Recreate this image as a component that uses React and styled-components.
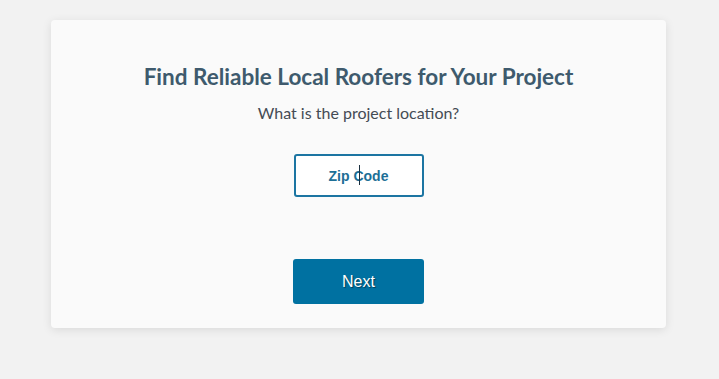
import styled, { createGlobalStyle } from "styled-components"

const GlobalStyle = createGlobalStyle`
  html, body {
    margin: 0;
    padding: 0;
    background: #f2f2f2;
  }
  body {
    font-family: Lato, "Liberation Sans", sans-serif;
  }
`

export default function App() {
  return (
    <>
      <GlobalStyle />
      <Page>
        <Card>
          <Title>Find Reliable Local Roofers for Your Project</Title>
          <Question>What is the project location?</Question>
          <ZipField>
            <ZipInput placeholder="Zip Code" readOnly />
            <Caret />
          </ZipField>
          <NextButton>Next</NextButton>
        </Card>
      </Page>
    </>
  )
}

const Page = styled.div`
  display: flex;
  padding: 20px 0 40px 51px;
  width: 719px;
  min-height: 379px;
  box-sizing: border-box;
`

const Card = styled.div`
  width: 615px;
  height: 308px;
  box-sizing: border-box;
  background: #fafafa;
  border-radius: 4px;
  box-shadow: 0 2px 10px rgba(0, 0, 0, 0.1);
  display: flex;
  flex-direction: column;
  align-items: center;
  padding-top: 43px;
`

const Title = styled.h2`
  margin: 0;
  font-family: Lato, "Liberation Sans", sans-serif;
  font-weight: 700;
  font-size: 22.5px;
  line-height: 27px;
  color: #3e5a6d;
`

const Question = styled.p`
  margin: 13px 0 0 0;
  font-family: Lato, "Liberation Sans", sans-serif;
  font-size: 16px;
  line-height: 20px;
  color: #444b54;
`

const ZipField = styled.div`
  position: relative;
  margin-top: 31px;
  width: 130px;
  height: 43px;
`

const ZipInput = styled.input`
  width: 100%;
  height: 100%;
  box-sizing: border-box;
  border: 2px solid #1c75a2;
  border-radius: 3px;
  background: #fff;
  outline: none;
  text-align: center;
  font-family: "Liberation Sans", Arial, sans-serif;
  font-weight: 700;
  font-size: 14px;
  &::placeholder {
    color: #1d6f96;
    opacity: 1;
  }
`

const Caret = styled.span`
  position: absolute;
  left: 65px;
  top: 11px;
  width: 1px;
  height: 20px;
  background: #1b3040;
`

const NextButton = styled.button`
  margin-top: 62px;
  width: 131px;
  height: 45px;
  border: none;
  border-radius: 3px;
  background: #0071a1;
  color: #fff;
  font-family: "Liberation Sans", Arial, sans-serif;
  font-size: 16px;
  text-shadow: 1px 1px 1px rgba(0, 0, 0, 0.45);
  cursor: pointer;
`
